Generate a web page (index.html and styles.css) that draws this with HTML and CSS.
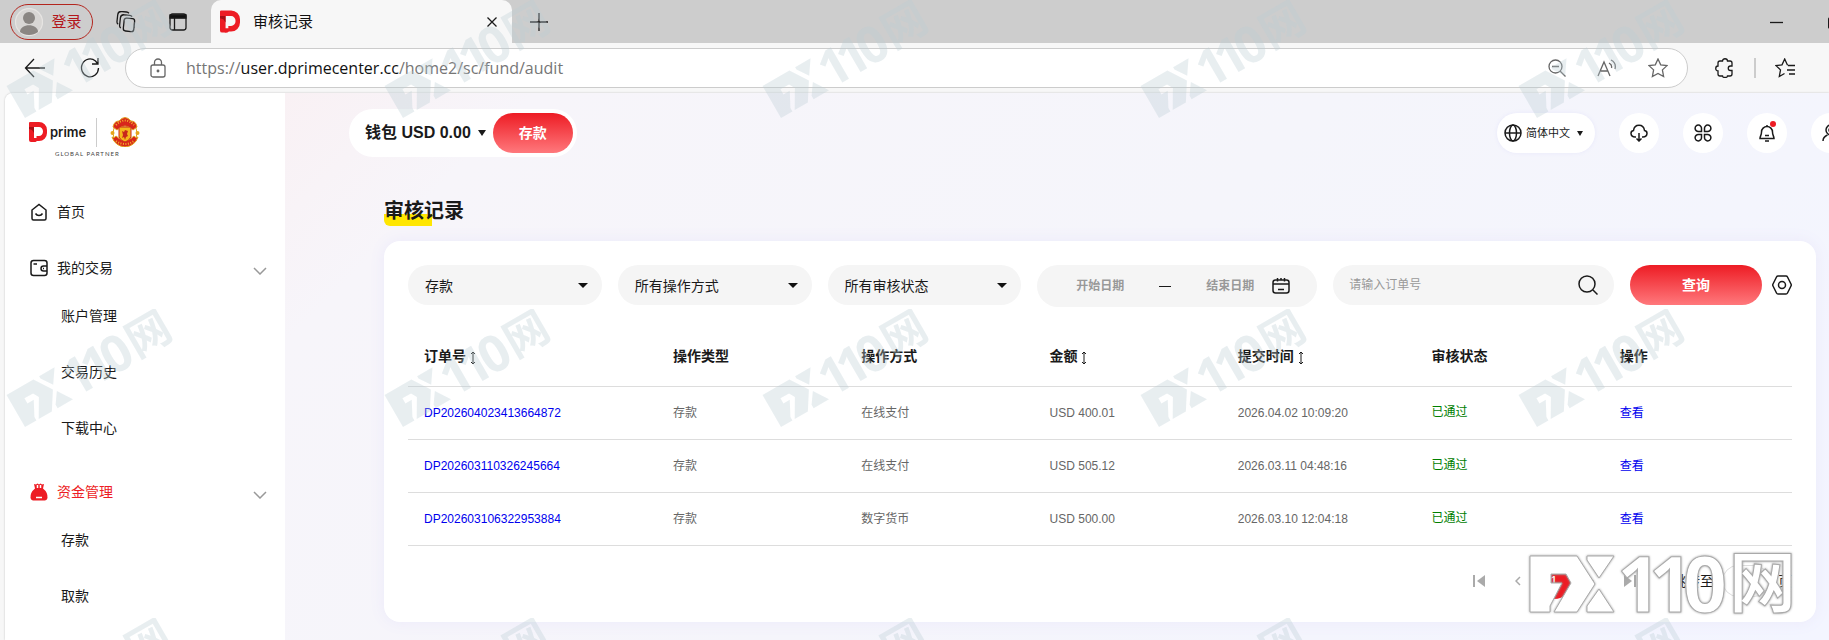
FILE: index.html
```html
<!DOCTYPE html>
<html lang="zh-CN">
<head>
    <meta charset="UTF-8">
    <meta name="viewport" content="width=device-width, initial-scale=1.0">
    <title>审核记录</title>
    <link rel="stylesheet" href="styles.css">
</head>
<body>

    <!-- shared shapes -->
    <svg class="defs" width="0" height="0" aria-hidden="true">
        <defs>
            <symbol id="d-logo" viewBox="0 0 18 20">
                <path fill="#ed1c24" fill-rule="evenodd" d="M1 0h9a8 8 0 0 1 8 8v3a8 8 0 0 1-8 8H8a4 4 0 0 1-4 1H2a2 2 0 0 1-2-2V1a1 1 0 0 1 1-1zM5 5v11h2.500v-2H10a4 4.500 0 0 0 0-9z"/>
                <path fill="#a50f15" d="M0 5h5v6l-2-3-3-1z"/>
            </symbol>
            <symbol id="sort" viewBox="0 0 6 14">
                <path d="M3 1v12M1 3l2-2 2 2M1 11l2 2 2-2" fill="none" stroke="#1a1a1a" stroke-width="1"/>
            </symbol>
            <g id="fx">
                <path fill-rule="evenodd" d="M0 0H47L65 28L47 56H24L41 27L36 18H21V27H32L20 50V56H0Z"/>
                <path d="M57 4V0H84L69 22Z"/>
                <path d="M69 33L84 56H57V50Z"/>
                <text class="fx-num" x="87 119 153" y="56">110</text>
                <text class="fx-cn" x="199" y="51">网</text>
            </g>
        </defs>
    </svg>

    <header class="browser">
        <div class="tabs">
            <button class="login">
                <svg width="28" height="28" viewBox="0 0 28 28"><circle cx="14" cy="14" r="13.5" fill="#d8d6d4" stroke="#e6e4e2"/><circle cx="14" cy="10" r="6" fill="#8a8683"/><path d="M5 24c0-9 18-9 18 0-5 4-13 4-18 0z" fill="#8a8683"/></svg>
                登录
            </button>
            <button class="tab-tool" aria-label="工作区"><svg width="20" height="22" viewBox="0 0 20 22"><g transform="rotate(6 10 11)"><rect x="8" y="7" width="10.500" height="13" rx="2.500"/><path d="M5.500 17.500C4 17 4 16 4 15V7.500C4 5 5 4 7.500 4H13c1.500 0 2 .5 2.500 1M2.500 14C1 13.500 1 12.500 1 11.500V5c0-3 1-4 4-4h4.500c1.500 0 2 .5 2.500 1"/></g></svg></button>
            <button class="tab-tool side" aria-label="标签页操作"><svg width="18" height="18" viewBox="0 0 18 18"><rect x="1" y="1" width="16" height="16" rx="2.500"/><path d="M1 4.500h16M5.500 5v12"/><path d="M1 2h16v3H1z" fill="#111"/></svg></button>
            <div class="tab">
                <svg width="20" height="23"><use href="#d-logo"/></svg>
                <span>审核记录</span>
                <button aria-label="关闭"><svg width="12" height="12" viewBox="0 0 12 12"><path d="M1.500 1.500l9 9M10.500 1.500l-9 9"/></svg></button>
            </div>
            <button class="tab-new" aria-label="新标签页"><svg width="18" height="18" viewBox="0 0 18 18"><path d="M9 0v18M0 9h18"/></svg></button>
            <div class="window-tools">
                <button aria-label="最小化"><svg width="13" height="14" viewBox="0 0 13 14"><path d="M0 7.500h13"/></svg></button>
                <button aria-label="最大化"><svg width="13" height="14" viewBox="0 0 13 14"><rect x=".5" y="2.500" width="11" height="11" rx="2"/></svg></button>
            </div>
        </div>
        <div class="toolbar">
            <button aria-label="返回"><svg width="22" height="20" viewBox="0 0 22 20"><path d="M21 10H2M10 1L1.500 10l8.500 9"/></svg></button>
            <button class="reload" aria-label="刷新"><svg width="20" height="22" viewBox="0 0 20 22"><path d="M18.500 11a8.500 9 0 1 1-3-7l2 2.500M18 1v6h-6"/></svg></button>
            <div class="address">
                <svg width="16" height="20" viewBox="0 0 16 20"><rect x="1" y="7" width="14" height="12" rx="2"/><path d="M4.500 7V4.500a3.500 3.500 0 0 1 7 0V7"/><circle cx="8" cy="13" r=".8"/></svg>
                <span class="url">https://<b>user.dprimecenter.cc</b>/home2/sc/fund/audit</span>
                <button aria-label="缩小"><svg width="18" height="18" viewBox="0 0 18 18"><circle cx="7.500" cy="7.500" r="6.500"/><path d="M12 12l5.500 5.500M4 7.500h7"/></svg></button>
                <button aria-label="朗读"><svg width="20" height="18" viewBox="0 0 20 18"><path d="M1 17L7 3l6 14M3.500 12h7M12 4c2 1 3 3 2.500 5M14 1c4 2 5 5 4 9"/></svg></button>
                <button aria-label="收藏"><svg width="20" height="20" viewBox="0 0 20 20"><path d="M10 1l2.700 5.800 6.300.8-4.600 4.300 1.200 6.600L10 15.400l-5.600 3.100 1.200-6.600L1 7.600l6.300-.8z"/></svg></button>
            </div>
            <button class="ext" aria-label="扩展"><svg width="20" height="20" viewBox="0 0 20 20"><path d="M3 5c0-1.500 1-2 2-2h2.500c0-3 5-3 5 0H15c1.500 0 2 1 2 2v3h-1.500c-3 0-3 4.500 0 4.500H17V16c0 1.500-1 2-2 2h-2.500c0 2-5 2-5 0H5c-1 0-2-.5-2-2v-3C0 13 0 8 3 8z"/></svg></button>
            <i class="bar"></i>
            <button aria-label="收藏夹"><svg width="20" height="20" viewBox="0 0 20 20"><path d="M13 7l-.7-.2L9.700 1 7 6.800l-6 .8 4.500 4.300-1.200 6.600 5.200-3M13 7.500h7M12 12h8M14 16h6"/></svg></button>
        </div>
    </header>

    <div class="page">
        <aside class="sidebar">
            <div class="brand">
                <div class="brand-row">
                    <svg width="18" height="20"><use href="#d-logo"/></svg>
                    <span class="brand-name">prime</span>
                    <i></i>
                    <svg class="crest" width="30" height="30" viewBox="0 0 30 30">
                        <circle cx="15" cy="16" r="12" fill="#fff" stroke="#e3a21a"/>
                        <path d="M3 10Q4 4 9 4Q15-3 21 4Q26 4 27 10L23 13Q15 5 7 13z" fill="#d8261c" stroke="#e0a01c"/>
                        <path d="M2 20Q4 22 6 19Q15 28 24 19Q26 22 28 20Q25 29 15 30Q5 29 2 20z" fill="#d8261c" stroke="#e0a01c"/>
                        <path d="M9 10h12v10q-2 4-6 5-4-1-6-5z" fill="#f5b81c" stroke="#c8281c"/>
                        <path d="M12 14l2 1 1-2 3 1-1 3 1 2-2 1-1 3-1-3-2 1 1-3z" fill="#c8281c"/>
                        <circle cx="2.500" cy="16" r="2" fill="#e6a41c"/><circle cx="27.500" cy="16" r="2" fill="#e6a41c"/>
                        <path d="M6 8Q15-1 24 8M6 24Q15 30 24 24" stroke="#f0b429" stroke-dasharray="1 1.500" stroke-width="2"/>
                    </svg>
                </div>
                <p>GLOBAL PARTNER</p>
            </div>
            <nav>
                <a class="item" href="#">
                    <svg width="18" height="18" viewBox="0 0 18 18"><path d="M2 7l7-5.500L16 7v8.500a1.500 1.500 0 0 1-1.500 1.500h-11A1.500 1.500 0 0 1 2 15.500zM5.500 10.500c1.500 2.500 5.500 2.500 7 0"/></svg>
                    首页
                </a>
                <a class="item group" href="#">
                    <svg width="18" height="18" viewBox="0 0 18 18"><rect x="1" y="1.500" width="16" height="15" rx="2.500"/><path d="M3.500 5H7M17 7h-3.500a2.500 2.500 0 0 0 0 5H17M13 9.500h1"/></svg>
                    我的交易
                    <svg class="chevron" width="14" height="8" viewBox="0 0 14 8"><path d="M1 1l6 6 6-6"/></svg>
                </a>
                <div class="sub">
                    <a href="#">账户管理</a>
                    <a href="#">交易历史</a>
                    <a href="#">下载中心</a>
                </div>
                <a class="item group active" href="#">
                    <svg class="bag" width="18" height="18" viewBox="0 0 18 18"><path fill="#ed1c24" d="M4 1l2 .5L7.500.5 9 1.500l1.500-1 1.500 1 2-.5-1 4.500q5 4 4.500 9.500-.5 2-2.500 2.500H3Q1 17 .5 15 0 9.500 5 5.500z"/><path d="M6 14.500h6M7.500 2v3M10.500 2v3" stroke="#fff"/></svg>
                    资金管理
                    <svg class="chevron" width="14" height="8" viewBox="0 0 14 8"><path d="M1 1l6 6 6-6"/></svg>
                </a>
                <div class="sub">
                    <a href="#">存款</a>
                    <a href="#">取款</a>
                </div>
            </nav>
        </aside>

        <main class="main">
            <div class="topbar">
                <div class="wallet">
                    <span>钱包 USD 0.00</span>
                    <i class="caret"></i>
                    <button class="red">存款</button>
                </div>
                <div class="actions">
                    <button class="lang">
                        <svg width="18" height="18" viewBox="0 0 18 18"><circle cx="9" cy="9" r="8"/><ellipse cx="9" cy="9" rx="3.500" ry="8"/><path d="M1 9h16"/></svg>
                        简体中文
                        <i class="caret small"></i>
                    </button>
                    <button class="round" aria-label="下载"><svg width="18" height="18" viewBox="0 0 18 18"><path d="M6 13H5C0 13 0 7 3.500 6.500 4.500-.5 13.500-.5 14.500 6.500 18 7 18 13 13 13h-1M9 9v8M6.500 14.500L9 17l2.500-2.500"/></svg></button>
                    <button class="round" aria-label="应用"><svg width="18" height="18" viewBox="0 0 18 18"><path d="M7.500 7.500h-3A3.200 3.200 0 1 1 7.500 4.500zM10.500 7.500v-3a3.200 3.200 0 1 1 3 3zM7.500 10.500v3a3.200 3.200 0 1 1-3-3zM10.500 10.500h3a3.200 3.200 0 1 1-3 3z"/></svg></button>
                    <button class="round notify" aria-label="通知"><svg width="18" height="18" viewBox="0 0 18 18"><path d="M2 14.500C2 12 3.500 11.500 3.500 8a5.500 5.500 0 0 1 11 0c0 3.500 1.500 4 1.500 6.500zM7 11.500h4M9 2.500V1M7 17h4"/></svg></button>
                    <button class="round" aria-label="用户"><svg width="18" height="18" viewBox="0 0 18 18"><circle cx="9" cy="6" r="5"/><circle cx="9" cy="6" r="2"/><path d="M1 17c0-3 2-5 4.500-6M17 17c0-3-2-5-4.500-6"/></svg></button>
                </div>
            </div>

            <section class="content">
                <h1>审核记录</h1>

                <div class="card">
                    <form class="filters">
                        <label class="select"><select aria-label="操作类型"><option>存款</option></select></label>
                        <label class="select"><select aria-label="操作方式"><option>所有操作方式</option></select></label>
                        <label class="select"><select aria-label="审核状态"><option>所有审核状态</option></select></label>
                        <div class="dates">
                            <input type="text" placeholder="开始日期" aria-label="开始日期">
                            <span></span>
                            <input type="text" placeholder="结束日期" aria-label="结束日期">
                            <svg width="18" height="18" viewBox="0 0 18 18"><rect x="1" y="3" width="16" height="13" rx="2.500"/><path d="M1 7h16M5.500 1v3.500M12.500 1v3.500M9 1v2M6 12.500h6"/></svg>
                        </div>
                        <label class="search">
                            <input type="text" placeholder="请输入订单号" aria-label="订单号">
                            <svg width="20" height="20" viewBox="0 0 20 20"><circle cx="9" cy="9" r="8"/><path d="M15 15l4.500 4.500"/></svg>
                        </label>
                        <button type="button" class="red query">查询</button>
                        <button type="button" class="setting" aria-label="设置"><svg width="20" height="20" viewBox="0 0 20 20"><path d="M6 1h8q1 0 1.500 1L19 9q.5 1 0 2l-3.500 7q-.5 1-1.500 1H6q-1 0-1.500-1L1 11q-.5-1 0-2l3.500-7Q5 1 6 1z"/><circle cx="10" cy="10" r="3.500"/></svg></button>
                    </form>

                    <table>
                        <thead>
                            <tr>
                                <th class="c-order">订单号 <svg class="sort" width="6" height="14"><use href="#sort"/></svg></th>
                                <th>操作类型</th>
                                <th>操作方式</th>
                                <th>金额 <svg class="sort" width="6" height="14"><use href="#sort"/></svg></th>
                                <th class="c-time">提交时间 <svg class="sort" width="6" height="14"><use href="#sort"/></svg></th>
                                <th>审核状态</th>
                                <th>操作</th>
                            </tr>
                        </thead>
                        <tbody>
                            <tr>
                                <td><a href="#">DP202604023413664872</a></td>
                                <td>存款</td>
                                <td>在线支付</td>
                                <td>USD 400.01</td>
                                <td>2026.04.02 10:09:20</td>
                                <td class="passed">已通过</td>
                                <td><a href="#">查看</a></td>
                            </tr>
                            <tr>
                                <td><a href="#">DP202603110326245664</a></td>
                                <td>存款</td>
                                <td>在线支付</td>
                                <td>USD 505.12</td>
                                <td>2026.03.11 04:48:16</td>
                                <td class="passed">已通过</td>
                                <td><a href="#">查看</a></td>
                            </tr>
                            <tr>
                                <td><a href="#">DP202603106322953884</a></td>
                                <td>存款</td>
                                <td>数字货币</td>
                                <td>USD 500.00</td>
                                <td>2026.03.10 12:04:18</td>
                                <td class="passed">已通过</td>
                                <td><a href="#">查看</a></td>
                            </tr>
                        </tbody>
                    </table>

                    <div class="pager">
                        <button aria-label="首页"><svg width="12" height="12" viewBox="0 0 12 12"><path d="M1 0v12" stroke-width="2"/><path d="M12 0v12L4 6z" fill="#aaa" stroke="none"/></svg></button>
                        <button class="prev" aria-label="上一页"><svg width="6" height="10" viewBox="0 0 6 10"><path d="M5 1L1 5l4 4"/></svg></button>
                        <button class="num">1</button>
                        <button class="next" aria-label="下一页"><svg width="6" height="10" viewBox="0 0 6 10"><path d="M1 1l4 4-4 4"/></svg></button>
                        <button aria-label="末页"><svg width="12" height="12" viewBox="0 0 12 12"><path d="M11 0v12" stroke-width="2"/><path d="M0 0v12l8-6z" fill="#aaa" stroke="none"/></svg></button>
                        <label class="jump">跳转至 <input type="text" aria-label="页码"> 页</label>
                        <svg class="stamp" width="262" height="56" viewBox="0 0 262 56"><use href="#fx"/></svg>
                    </div>
                </div>
            </section>
        </main>
    </div>

    <svg class="watermark" aria-hidden="true">
        <defs>
            <pattern id="tile" width="378" height="309" patternUnits="userSpaceOnUse">
                <use href="#fx" fill="#bbcdd4" transform="translate(25 118) rotate(-30) scale(.66) translate(0 -56)"/>
            </pattern>
        </defs>
        <rect width="100%" height="100%" fill="url(#tile)"/>
    </svg>

</body>
</html>
```
FILE: styles.css
```css
* {
    margin: 0;
    padding: 0;
    box-sizing: border-box;
}

body {
    position: relative;
    min-height: 100vh;
    display: flex;
    flex-direction: column;
    overflow: hidden;
    background: #f7f7f7;
    color: #1a1a1a;
    font-family: "Liberation Sans", "Noto Sans CJK SC", sans-serif;
    font-size: 14px;
    line-height: 20px;
}

a {
    color: inherit;
    text-decoration: none;
}

button, input, select {
    font: inherit;
    color: inherit;
    border: none;
    background: none;
}

button {
    display: flex;
    align-items: center;
    justify-content: center;
    cursor: pointer;
}

svg {
    flex: none;
    fill: none;
    stroke: #1a1a1a;
    stroke-width: 1.5;
}

use, .defs, .bag, .crest {
    stroke: none;
}

.crest {
    stroke-width: 1;
}

.defs {
    position: absolute;
}

/* browser */
.tabs {
    height: 43px;
    display: flex;
    align-items: center;
    padding-left: 10px;
    background: #cdcdcd;
    overflow: hidden;
}

.tabs svg, .toolbar svg {
    stroke-width: 1.3;
}

.login {
    width: 83px;
    height: 36px;
    gap: 8px;
    padding-right: 6px;
    border: 1px solid #b3261e;
    border-radius: 18px;
    color: #b3161b;
    font-size: 15px;
}

.login svg {
    stroke: none;
}

.tab-tool {
    margin-left: 23px;
}

.tab-tool.side {
    margin-left: 33px;
}

.tab {
    align-self: flex-end;
    width: 301px;
    height: 43px;
    margin-left: 24px;
    padding: 0 14px 0 9px;
    display: flex;
    align-items: center;
    gap: 13px;
    background: #f7f7f7;
    border-radius: 10px 10px 0 0;
    color: #111;
    font-size: 15px;
}

.tab span {
    flex: 1;
}

.tab-new {
    margin-left: 18px;
}

.window-tools {
    margin-left: auto;
    margin-right: -12px;
    display: flex;
    gap: 45px;
}

.toolbar {
    height: 49px;
    display: flex;
    align-items: center;
    padding: 0 34px 0 24px;
}

.reload {
    margin: 0 25px 0 34px;
}

.address {
    flex: 1;
    height: 40px;
    display: flex;
    align-items: center;
    padding: 0 19px 0 24px;
    background: #fff;
    border: 1px solid #ccc;
    border-radius: 20px;
}

.address svg {
    stroke: #666;
}

.address button {
    margin-left: 31px;
}

.url {
    flex: 1;
    margin-left: 20px;
    color: #767676;
    font-family: "Open Sans", "Noto Sans", sans-serif;
    font-size: 16px;
}

.url b {
    color: #111;
    font-weight: normal;
}

.ext {
    margin-left: 27px;
}

.bar {
    width: 2px;
    height: 20px;
    margin: 0 19px;
    background: #ccc;
}

/* page */
.page {
    flex: 1;
    display: flex;
    margin: 1px 0 0 5px;
    border-radius: 8px 0 0 0;
    box-shadow: 0 0 2px #bbb;
    overflow: hidden;
}

.sidebar {
    flex: none;
    width: 280px;
    background: #fff;
}

.brand {
    height: 91px;
    padding: 24px 0 0 24px;
}

.brand-row {
    display: flex;
    align-items: center;
}

.brand-name {
    margin-left: 3px;
    font-family: Inter, sans-serif;
    font-size: 13px;
    font-weight: 600;
}

.brand-row i {
    width: 1px;
    height: 29px;
    margin: 0 13px 0 10px;
    background: #ccc;
}

.brand p {
    padding-left: 26px;
    font-family: Lato, sans-serif;
    font-size: 6px;
    line-height: 14px;
    letter-spacing: 1px;
    color: #444;
}

.item {
    height: 56px;
    display: flex;
    align-items: center;
    gap: 9px;
    padding: 0 18px 0 25px;
}

.group {
    height: 48px;
    padding-top: 8px;
}

.active {
    color: #ed1c24;
}

.chevron {
    margin: 6px 0 0 auto;
    stroke: #999;
}

.sub {
    margin-bottom: 8px;
    padding-left: 56px;
}

.sub a {
    display: block;
    line-height: 56px;
}

.main {
    flex: 1;
    min-width: 0;
    padding: 16px 13px 18px 64px;
    background: linear-gradient(135deg, #f9f1f4 0%, #f7f5fa 12%, #f5f5fb 50%, #f3f5ff 100%);
}

.topbar {
    display: flex;
    align-items: center;
    justify-content: space-between;
    margin-right: -35px;
}

.wallet {
    height: 48px;
    display: flex;
    align-items: center;
    padding: 0 4px 0 16px;
    background: #fff;
    border-radius: 24px;
    font-size: 16px;
    font-weight: bold;
}

.caret {
    margin: 0 7px;
    border: 4px solid transparent;
    border-top: 6px solid #1a1a1a;
    border-bottom: 0;
}

.caret.small {
    margin: 0 0 0 3px;
    border-width: 5px 3px 0;
}

.red {
    width: 80px;
    height: 40px;
    border-radius: 20px;
    background: linear-gradient(#ed1c24, #ff787c);
    color: #fff;
    font-size: 14px;
    font-weight: bold;
}

.actions {
    display: flex;
    gap: 24px;
}

.lang {
    height: 40px;
    gap: 4px;
    padding: 0 12px 0 7px;
    background: #fff;
    border-radius: 20px;
    box-shadow: 0 0 4px #e8e8fa;
    font-size: 11px;
}

.round {
    position: relative;
    width: 40px;
    height: 40px;
    background: #fff;
    border-radius: 50%;
}

.notify::after {
    content: "";
    position: absolute;
    top: 8px;
    right: 11px;
    width: 6px;
    height: 6px;
    border-radius: 50%;
    background: #ed1c24;
}

.content {
    margin-left: 35px;
}

h1 {
    width: fit-content;
    margin: 39px 0 15px;
    font-size: 20px;
    line-height: 30px;
    background: linear-gradient(#ffe600, #ffe600) no-repeat left bottom / 48px 12px;
    border-radius: 0 0 0 6px;
}

.card {
    padding: 24px 24px 23px;
    background: #fff;
    border-radius: 16px;
    box-shadow: 0 0 16px #ebe9fa;
}

.filters {
    display: flex;
    align-items: flex-start;
    gap: 16px;
}

.select {
    position: relative;
    flex: 0 0 14%;
    display: flex;
}

.select::after {
    content: "";
    position: absolute;
    top: 18px;
    right: 14px;
    border: 5px solid transparent;
    border-top-color: #111;
    border-bottom: 0;
}

select {
    width: 100%;
    height: 40px;
    padding: 1px 17px 0;
    appearance: none;
    background: #f5f5f5;
    border-radius: 20px;
}

.dates {
    width: 280px;
    height: 42px;
    display: flex;
    align-items: center;
    padding-left: 21px;
    background: #f5f5f5;
    border-radius: 21px;
    font-size: 12px;
    font-weight: bold;
}

.dates input {
    width: 84px;
    text-align: center;
}

.dates span {
    width: 12px;
    height: 1px;
    margin: 0 17px;
    background: #1a1a1a;
}

input::placeholder {
    color: #999;
}

.search {
    flex: 1;
    height: 40px;
    display: flex;
    align-items: center;
    padding: 0 16px;
    background: #f5f5f5;
    border-radius: 20px;
    font-size: 12px;
}

.search input {
    flex: 1;
    min-width: 0;
}

.query {
    width: 132px;
}

.setting {
    height: 40px;
    margin-left: -6px;
}

table {
    width: 100%;
    margin-top: 20px;
    border-collapse: collapse;
    table-layout: fixed;
}

th, td {
    padding: 0 16px;
    border-bottom: 1px solid #ddd;
    text-align: left;
    white-space: nowrap;
}

th {
    height: 59px;
}

.sort {
    vertical-align: middle;
}

td {
    height: 53px;
    color: #666;
    font-size: 12px;
}

td a {
    color: #0000ee;
}

.c-order {
    width: 18%;
}

.c-time {
    width: 14%;
}

.passed {
    padding-bottom: 2px;
    color: green;
}

.pager {
    position: relative;
    height: 53px;
    display: flex;
    align-items: flex-end;
    justify-content: flex-end;
}

.pager button {
    height: 36px;
}

.pager button svg {
    stroke: #aaa;
}

.pager .prev {
    margin: 0 15px 0 30px;
}

.pager .next {
    margin: 0 30px 0 16px;
}

.pager .num {
    width: 36px;
    border-radius: 50%;
    background: #ed1c24;
    color: #fff;
}

.jump {
    height: 36px;
    display: flex;
    align-items: center;
    gap: 8px;
    margin-left: 36px;
}

.jump input {
    width: 48px;
    height: 32px;
    border: 1px solid #ddd;
    border-radius: 16px;
}

/* site mark */
.fx-num {
    font-family: "Open Sans", sans-serif;
    font-size: 77px;
    font-weight: bold;
}

.fx-cn {
    font-family: "Noto Sans CJK SC", sans-serif;
    font-size: 67px;
    font-weight: bold;
}

.stamp {
    position: absolute;
    right: 0;
    bottom: -13px;
    overflow: visible;
    fill: #fff;
    filter: drop-shadow(0 0 1px #999);
    pointer-events: none;
}

.stamp use {
    stroke: #aaa;
    stroke-width: 1;
}

.watermark {
    position: absolute;
    top: 0;
    left: 0;
    width: 100%;
    height: 100%;
    opacity: .33;
    stroke: none;
    pointer-events: none;
}
```
